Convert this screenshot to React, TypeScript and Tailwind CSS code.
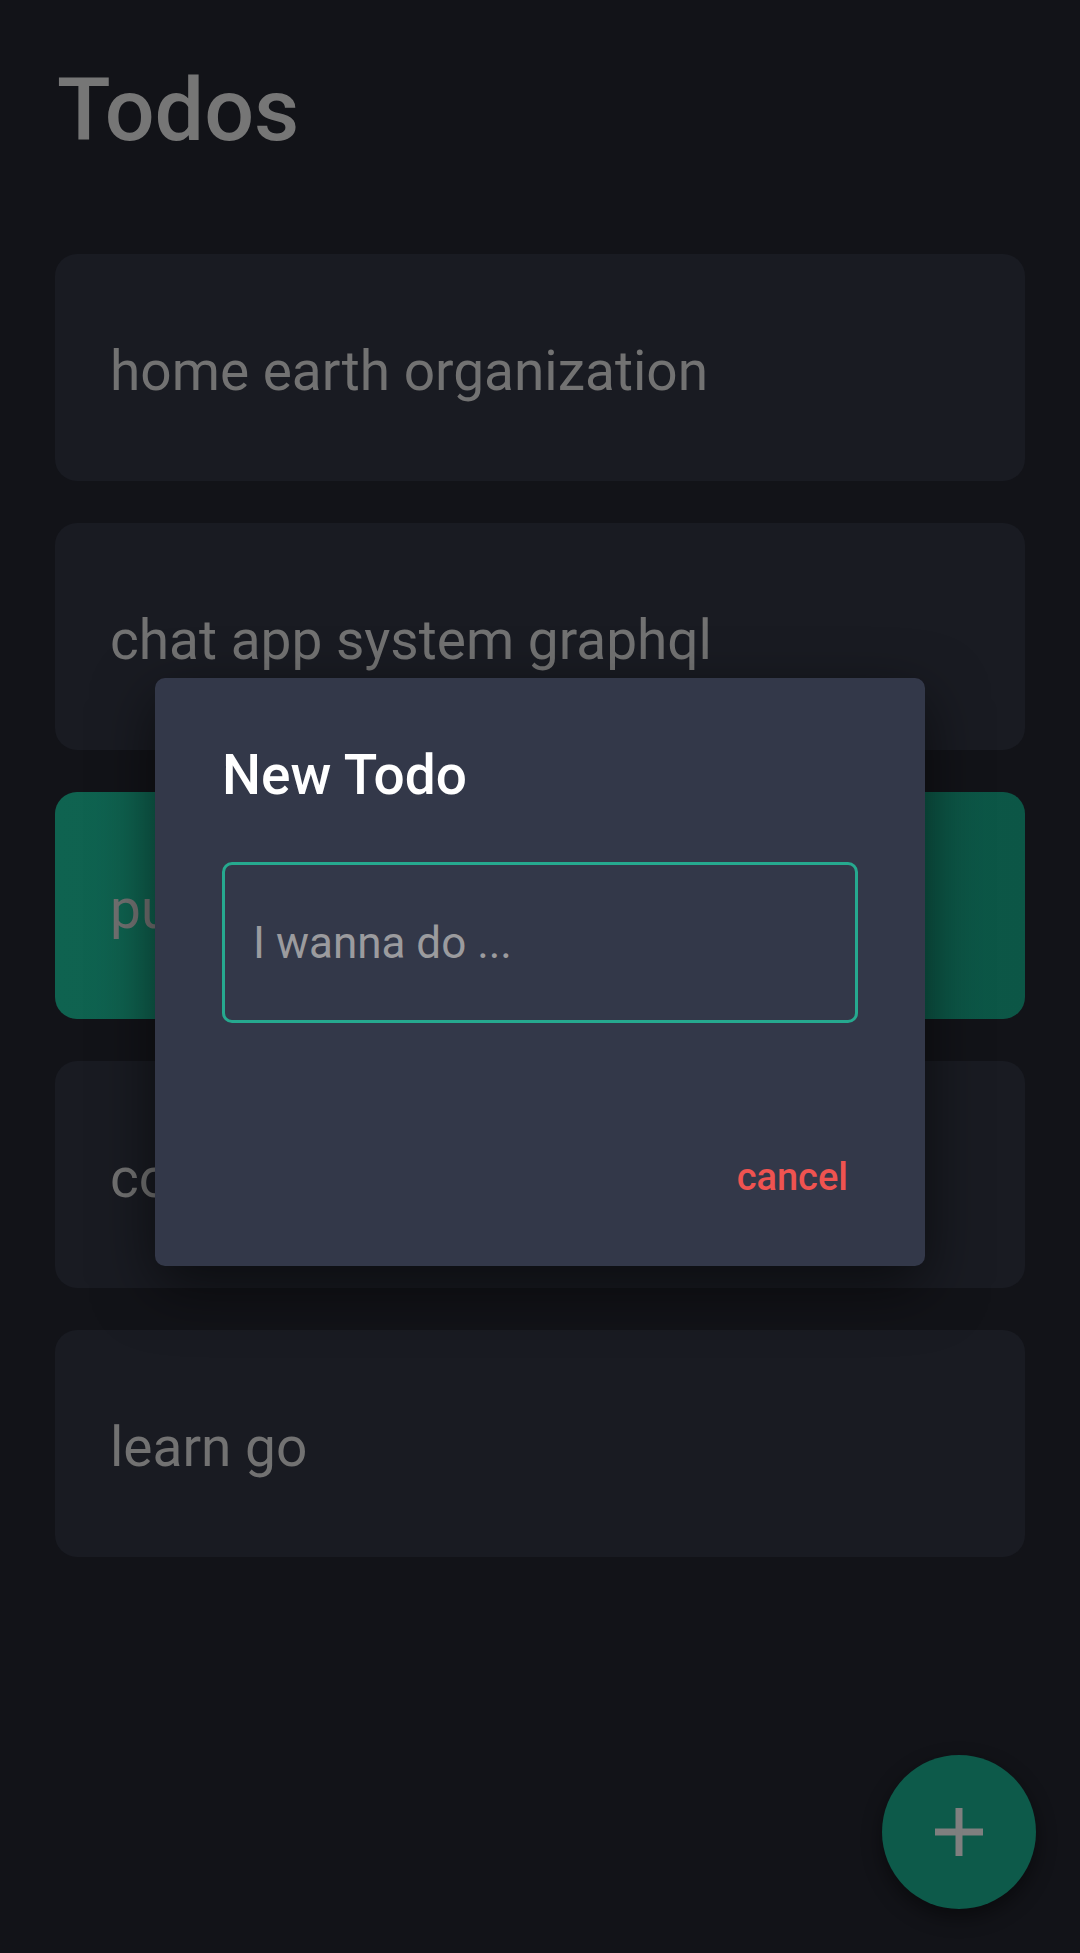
import React from "react";

const todos = [
  { id: 1, title: "home earth organization", done: false },
  { id: 2, title: "chat app system graphql", done: false },
  { id: 3, title: "push notifications", done: true },
  { id: 4, title: "code review", done: false },
  { id: 5, title: "learn go", done: false },
];

const TodoCard = ({ title, done }: { title: string; done: boolean }) => {
  return (
    <div
      className={`flex items-center h-[227px] rounded-[22px] pl-[55px] pt-[7px] ${
        done
          ? "bg-gradient-to-r from-[#0f6350] to-[#0c5646]"
          : "bg-[#191b22]"
      }`}
    >
      <span className="text-[55px] leading-none text-[#727272]">{title}</span>
    </div>
  );
};

const NewTodoDialog = () => {
  return (
    <div className="absolute inset-0 flex items-center justify-center pb-[9px]">
      <div className="flex flex-col w-[770px] h-[588px] rounded-[10px] bg-[#333849] px-[67px] pt-[70px] shadow-[0_20px_60px_rgba(0,0,0,0.55)]">
        <h2 className="text-[55px] leading-none font-medium text-white">
          New Todo
        </h2>
        <div className="mt-[59px] flex items-center h-[161px] rounded-[10px] border-[3px] border-[#26a98f] pl-[28px]">
          <span className="text-[44px] leading-none text-[#9b9b9e]">
            I wanna do ...
          </span>
        </div>
        <div className="flex justify-end mt-[135px]">
          <button className="mr-[10px] text-[38px] leading-none font-medium text-[#ef5350]">
            cancel
          </button>
        </div>
      </div>
    </div>
  );
};

export default function App() {
  return (
    <div
      className="relative w-[1080px] min-h-[1953px] bg-[#121318] overflow-hidden"
      style={{ fontFamily: "Roboto, 'Noto Sans', sans-serif" }}
    >
      <div className="px-[55px] pt-[66px]">
        <h1 className="pl-[2px] text-[88px] leading-none font-medium text-[#767676]">
          Todos
        </h1>
        <div className="mt-[100px] flex flex-col gap-[42px]">
          {todos.map((todo) => (
            <TodoCard key={todo.id} title={todo.title} done={todo.done} />
          ))}
        </div>
      </div>

      <NewTodoDialog />

      <button className="absolute right-[44px] bottom-[44px] flex items-center justify-center w-[154px] h-[154px] rounded-full bg-[#0d5a4a] shadow-[0_8px_20px_rgba(0,0,0,0.45)]">
        <svg width="48" height="48" viewBox="0 0 48 48">
          <rect x="0" y="20.5" width="48" height="7" fill="#7f7f7f" />
          <rect x="20.5" y="0" width="7" height="48" fill="#7f7f7f" />
        </svg>
      </button>
    </div>
  );
}
